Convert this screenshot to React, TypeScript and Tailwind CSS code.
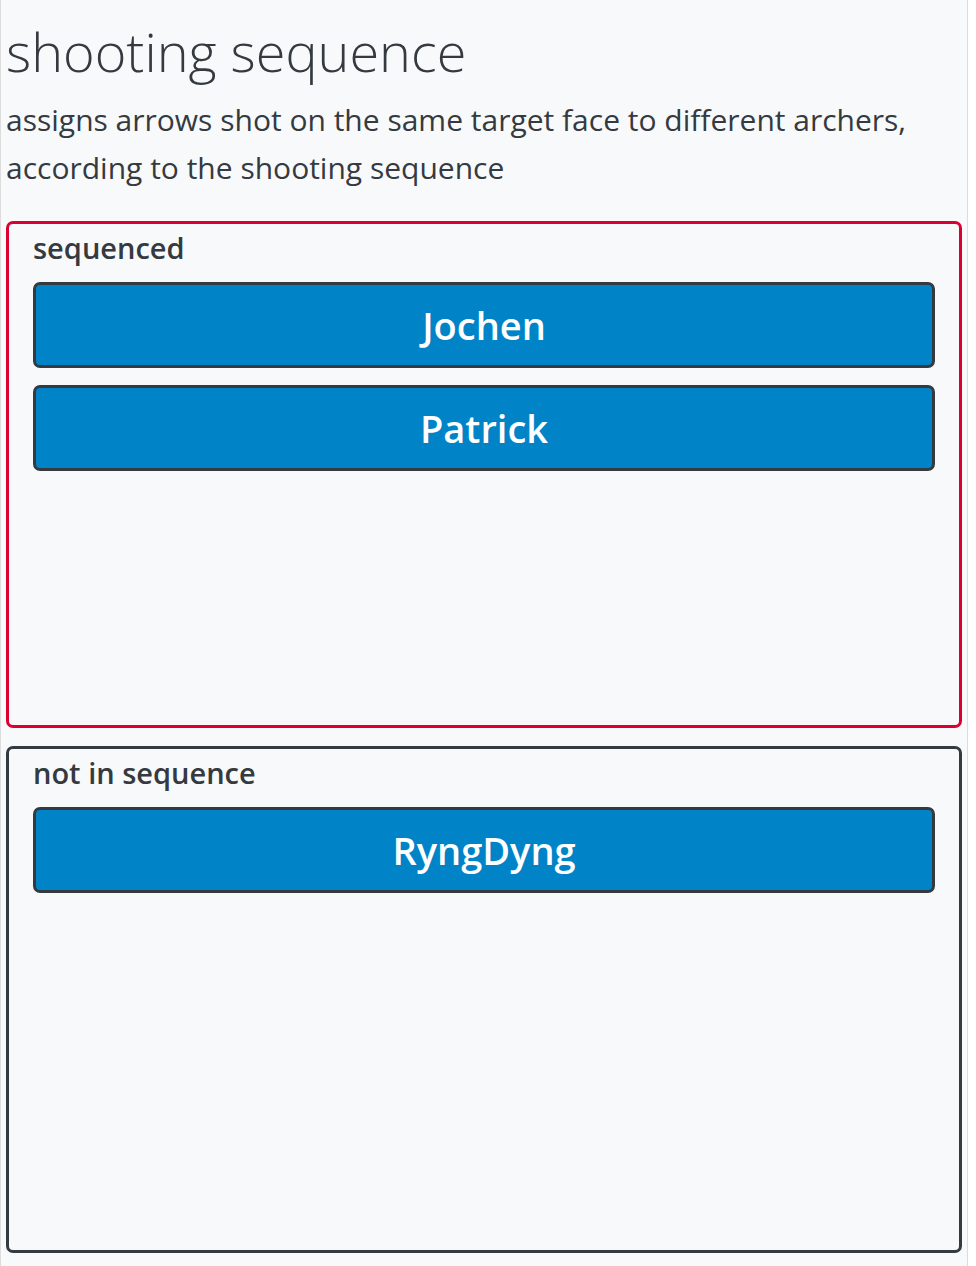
import React from "react";

function Archer({ name }: { name: string }) {
  return (
    <div className="flex h-[86px] items-center justify-center rounded-[7px] border-[3px] border-[#343a40] bg-[#0084c7] text-[38px] font-semibold text-white">
      {name}
    </div>
  );
}

function Zone({ label, names, border }: { label: string; names: string[]; border: string }) {
  return (
    <div className={`flex h-[507px] flex-col rounded-[7px] border-[3px] px-[24px] ${border}`}>
      <div className="pt-[3px] pb-[14px] text-[29px] font-semibold leading-[41px] text-[#343a40]">{label}</div>
      <div className="flex flex-col gap-[17px]">
        {names.map((n) => (
          <Archer key={n} name={n} />
        ))}
      </div>
    </div>
  );
}

export default function App() {
  return (
    <div className="min-h-[1266px] w-[976px] bg-white" style={{ fontFamily: '"Open Sans", "Noto Sans", sans-serif' }}>
      <div className="min-h-[1266px] w-[968px] border-x border-[#dcdcdc] bg-[#f8f9fa] px-[5px] pt-[16px]">
        <h1 className="text-[54px] font-light leading-[70px] text-[#343a40]">shooting sequence</h1>
        <p className="mt-[10px] text-[30px] leading-[48px] text-[#343a40]">
          assigns arrows shot on the same target face to different archers, according to the shooting sequence
        </p>
        <div className="mt-[29px] flex flex-col gap-[18px]">
          <Zone label="sequenced" names={["Jochen", "Patrick"]} border="border-[#dc0032]" />
          <Zone label="not in sequence" names={["RyngDyng"]} border="border-[#343a40]" />
        </div>
      </div>
    </div>
  );
}
